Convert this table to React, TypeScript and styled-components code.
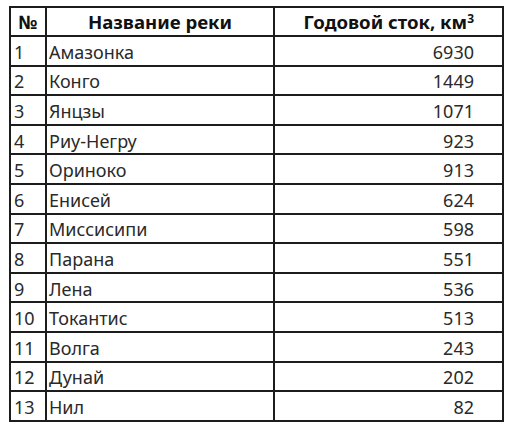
import React from "react";
import styled, { createGlobalStyle } from "styled-components";

const Global = createGlobalStyle`
  html, body { margin: 0; padding: 0; background: #fff; }
  body { padding: 6px 0 0 9px; font-family: "Noto Sans", "DejaVu Sans", sans-serif; }
`;

const Table = styled.table`
  border-collapse: collapse;
  table-layout: fixed;
  width: 493px;
  color: #2a2a2a;
  font-size: 18px;
`;

const HeadCell = styled.th<{ $align?: string }>`
  border: 2px solid #1c1c1c;
  height: 26px;
  padding: 1px ${(p) => (p.$align === "right" ? "28px" : "2px")} 0 2px;
  font-weight: 700;
  font-size: 18.6px;
  color: #111;
  text-align: ${(p) => p.$align || "center"};
  line-height: 1;
  white-space: nowrap;
  box-sizing: content-box;
`;

const Cell = styled.td<{ $kind: "num" | "name" | "val" }>`
  border: 2px solid #1c1c1c;
  height: 25.6px;
  line-height: 1;
  white-space: nowrap;
  box-sizing: content-box;
  padding: ${(p) =>
    p.$kind === "val" ? "2px 28px 0 2px" : p.$kind === "num" ? "2px 2px 0 3px" : "2px 2px 0 2px"};
  text-align: ${(p) => (p.$kind === "val" ? "right" : "left")};
`;

const Sup = styled.sup`
  font-size: 12px;
  vertical-align: 6px;
  line-height: 0;
`;

const rows: [string, number][] = [
  ["Амазонка", 6930],
  ["Конго", 1449],
  ["Янцзы", 1071],
  ["Риу-Негру", 923],
  ["Ориноко", 913],
  ["Енисей", 624],
  ["Миссисипи", 598],
  ["Парана", 551],
  ["Лена", 536],
  ["Токантис", 513],
  ["Волга", 243],
  ["Дунай", 202],
  ["Нил", 82],
];

export default function App() {
  return (
    <>
      <Global />
      <Table>
        <colgroup>
          <col style={{ width: 36 }} />
          <col style={{ width: 228 }} />
          <col style={{ width: 229 }} />
        </colgroup>
        <thead>
          <tr>
            <HeadCell>№</HeadCell>
            <HeadCell>Название реки</HeadCell>
            <HeadCell $align="right">
              Годовой сток, км<Sup>3</Sup>
            </HeadCell>
          </tr>
        </thead>
        <tbody>
          {rows.map(([name, v], i) => (
            <tr key={name}>
              <Cell $kind="num">{i + 1}</Cell>
              <Cell $kind="name">{name}</Cell>
              <Cell $kind="val">{v}</Cell>
            </tr>
          ))}
        </tbody>
      </Table>
    </>
  );
}
